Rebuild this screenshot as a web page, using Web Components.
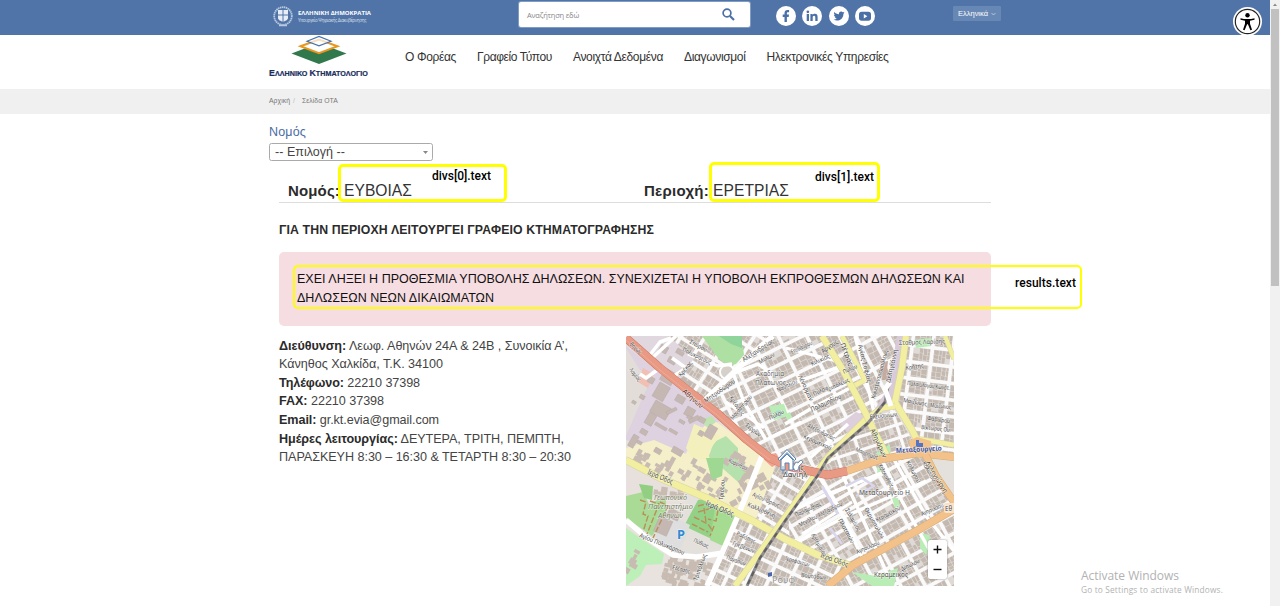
<!DOCTYPE html>
<html lang="el">
<head>
<meta charset="utf-8">
<title>Ελληνικό Κτηματολόγιο</title>
<style>
body{margin:0;width:1280px;height:606px;overflow:hidden;background:#fff;font-family:"Liberation Sans",Arial,sans-serif;color:#333}
</style>
</head>
<body>
<cadastre-page></cadastre-page>
<script>
const define=(name,html,ready)=>customElements.define(name,class extends HTMLElement{
  constructor(){super();this.attachShadow({mode:'open'}).innerHTML=html;}
  connectedCallback(){if(ready)ready.call(this,this.shadowRoot);}
});

/* One line of text whose tracking is adjusted to fill the width in "w". */
define('fit-text','<style>:host{display:block;white-space:pre;flex:none}span{display:inline}</style><span><slot></slot></span>',function(r){
  const w=+this.getAttribute('w'),n=this.textContent.length;
  this.style.width=w+'px';
  const s=r.querySelector('span');
  const now=s.getBoundingClientRect().width;
  if(now)this.style.letterSpacing=((w-now)/n).toFixed(4)+'px';
});

define('social-icon','<style>:host{display:flex;width:20px;height:20px;border-radius:50%;background:#fff;color:#4a70a6}svg{width:20px;height:20px}</style><svg viewBox="0 0 20 20" fill="currentColor"></svg>',function(r){
  const d={
   facebook:'<path d="M8.500 16V10.900H6.700V8.500h1.800V7.100C8.500 5 9.700 4 11.500 4c.8 0 1.400.1 1.600.1v2.100h-1.100c-.9 0-1.100.5-1.100 1.100v1.200h2.100l-.3 2.400h-1.800V16z"/>',
   linkedin:'<path d="M4.700 8h2.300v7H4.700zM8.400 8h2.200v1c.4-.7 1.200-1.200 2.300-1.200 2.200 0 2.700 1.500 2.700 3.400V15h-2.300v-3.400c0-.9-.1-1.800-1.200-1.800s-1.400.8-1.400 1.700V15H8.400z"/><circle cx="5.850" cy="5.800" r="1.350"/>',
   twitter:'<path d="M15.500 6.500c-.4.2-.8.300-1.300.4.500-.3.800-.7 1-1.200-.4.300-.9.400-1.400.5a2.250 2.250 0 0 0-3.850 2.050C8 8.200 6.400 7.300 5.300 6c-.6 1-.3 2.300.7 3-.4 0-.7-.1-1-.3 0 1.100.8 2 1.800 2.250-.3.100-.7.100-1 0 .3.900 1.100 1.550 2.100 1.600-1 .75-2.100 1.050-3.300.9 1 .65 2.200 1 3.450 1 4.200 0 6.500-3.500 6.350-6.800.4-.3.800-.7 1.100-1.150z"/>',
   youtube:'<rect x="4" y="5.700" width="12" height="9" rx="2.600"/><path fill="#fff" d="M8.800 8v4.400l3.500-2.200z"/>'};
  r.querySelector('svg').innerHTML=d[this.getAttribute('name')];
});

define('top-bar',`<style>
:host{display:flex;height:35px;background:#5074a8;box-sizing:border-box;padding-left:272px;align-items:flex-start;color:#fff;position:relative}
.crest{width:22px;height:22px;margin-top:5px;flex:none}
.gov{margin:9px 0 0 4px;width:221px;font:bold 6px/9px "Open Sans",sans-serif}
.gov fit-text+fit-text{font:4.500px/5px "Open Sans",sans-serif;opacity:.75}
.search{margin-top:2px;width:231px;height:25px;background:#fff;border-radius:2px;display:flex;align-items:center;justify-content:space-between;box-sizing:border-box;padding:0 15px 0 8px;color:#888;font:7.500px/12px "Open Sans",sans-serif;flex:none;box-shadow:0 0 0 1px #7f9cc3}
.social{display:flex;gap:6.300px;margin:6px 0 0 26px;width:177px}
.lang{margin-top:6px;background:#6787b5;height:15px;width:48px;display:flex;align-items:center;gap:3px;box-sizing:border-box;padding-left:5px;font:7.500px/15px "Liberation Sans",sans-serif;border-radius:1px}
.access{position:absolute;left:1233px;top:6.500px}
</style>
<svg class="crest" viewBox="0 0 22 22"><circle cx="11" cy="11" r="8.800" fill="none" stroke="#b8c9df" stroke-width="1.800" stroke-dasharray="1.500 .5"/><path d="M6 5h10v8c0 2-3 3-5 4-2-1-5-2-5-4z" fill="#e6edf6"/><path d="M11 5v12M6 10h10" stroke="#5074a8" stroke-width="1"/><path d="M7 20.500h8" stroke="#b8c9df" stroke-width="1.500"/></svg>
<div class="gov"><fit-text w="73">ΕΛΛΗΝΙΚΗ ΔΗΜΟΚΡΑΤΙΑ</fit-text><fit-text w="68">Υπουργείο Ψηφιακής Διακυβέρνησης</fit-text></div>
<div class="search"><fit-text w="52">Αναζήτηση εδώ</fit-text><svg width="13" height="13" viewBox="0 0 13 13" fill="none" stroke="#4a70a6"><circle cx="5" cy="5" r="3.900" stroke-width="1.700"/><path d="M8 8l4 4" stroke-width="2.200"/></svg></div>
<div class="social"><social-icon name="facebook"></social-icon><social-icon name="linkedin"></social-icon><social-icon name="twitter"></social-icon><social-icon name="youtube"></social-icon></div>
<div class="lang"><fit-text w="30">Ελληνικά</fit-text><svg width="5" height="4" viewBox="0 0 5 4"><path d="M.5 1l2 2 2-2" fill="none" stroke="#cbd7e8" stroke-width=".8"/></svg></div>
<svg class="access" width="29" height="29" viewBox="0 0 29 29"><circle cx="14.500" cy="14.500" r="14.500" fill="#fff"/><circle cx="14.500" cy="14.500" r="12.200" fill="#fff" stroke="#222" stroke-width="1.200"/><circle cx="14.500" cy="8.300" r="2.200"/><path d="M7.500 11.200q7 1.700 14 0v1.600l-4.500.9v3l2 6-1.600.6-2.500-6h-.8l-2.500 6-1.600-.6 2-6v-3l-4.500-.9z"/></svg>`);

define('main-nav',`<style>
:host{display:flex;height:54px;padding-left:269px;color:#333;font:12px/18px "Liberation Sans",sans-serif}
.logo{width:100px;margin-right:36px;flex:none;color:#192d5c}
.logo svg{display:block;width:56px;height:30px;margin:0 0 0 22px}
.logo fit-text{font:bold 7.200px/10px "Liberation Sans",sans-serif;margin-top:3px;-webkit-text-stroke:.2px #192d5c}
.logo b{font-size:8.800px}
nav{display:flex;gap:21px;padding-top:13px}
</style>
<div class="logo"><svg viewBox="0 0 56 30"><path d="M.5 18.500L28 8l27.500 10.500L28 29z" fill="#31794c"/><path d="M9.500 11.200L28 4.500l18.500 6.700L28 18.200z" fill="#fff" stroke="#e8961d" stroke-width="2"/><path d="M16 6.300L28 1.500l12 4.800L28 10.900z" fill="#fff" fill-opacity=".7" stroke="#4a72ad" stroke-width="1.200"/></svg><fit-text w="99"><b>Ε</b>ΛΛΗΝΙΚΟ <b>Κ</b>ΤΗΜΑΤΟΛΟΓΙΟ</fit-text></div>
<nav><fit-text w="51">Ο Φορέας</fit-text><fit-text w="75">Γραφείο Τύπου</fit-text><fit-text w="90">Ανοιχτά Δεδομένα</fit-text><fit-text w="61.500">Διαγωνισμοί</fit-text><fit-text w="122">Ηλεκτρονικές Υπηρεσίες</fit-text></nav>`);

define('bread-crumbs',`<style>:host{display:flex;height:24.500px;background:#f0f0f0;padding-left:269px;font:6.800px/24px "Liberation Sans",sans-serif;color:#777}i{font-style:normal;margin:0 7px 0 3px;color:#bbb}</style>
<fit-text w="21">Αρχική</fit-text><i>/</i><fit-text w="36">Σελίδα ΟΤΑ</fit-text>`);

define('prefecture-select',`<style>
:host{display:block;padding:9.500px 0 0 269px;font:12.500px/18px "Liberation Sans",sans-serif;color:#4a6da3}
.box{margin-top:2px;width:164px;height:18px;box-sizing:border-box;border:1px solid #aaa;border-radius:2.500px;display:flex;align-items:center;justify-content:space-between;padding:0 4px 0 5px;color:#444}
</style><fit-text w="37">Νομός</fit-text><div class="box"><fit-text w="70">-- Επιλογή --</fit-text><svg width="5" height="3"><path d="M0 0h5L2.500 3z" fill="#888"/></svg></div>`);

define('callout-box',`<style>:host{position:absolute;box-sizing:border-box;border:3px solid #ff0;border-radius:5px;display:flex;justify-content:flex-end;color:#000;font:500 12px/14px Roboto,sans-serif}</style><slot></slot>`);

define('area-info',`<style>
:host{display:block;margin-left:279px;width:712px}
.head{display:flex;height:42px;box-sizing:border-box;border-bottom:1.500px solid #ddd;font-size:15.600px;line-height:18px;padding:20.500px 0 0 9px;color:#333}
.head b{font-size:15px}
.head b,.addr b,h2{color:#2b2b2b}
.head .a{width:356px;display:flex;gap:4px}.head .b{display:flex;gap:4px}
h2{margin:18px 0 0;font-size:12.300px;line-height:18px}
.alert{margin-top:13px;height:74px;box-sizing:border-box;background:#f6dde1;border-radius:5px;padding:18px 0 0 18px;font-size:12.500px;line-height:18.500px;color:#111}
.cols{display:flex;margin-top:10px}
.addr{width:347px;font-size:12.600px;line-height:18.600px;color:#444;padding-top:.6px;box-sizing:border-box}
</style>
<div class="head"><div class="a"><fit-text w="52"><b>Νομός:</b></fit-text><fit-text w="68">ΕΥΒΟΙΑΣ</fit-text></div><div class="b"><fit-text w="65"><b>Περιοχή:</b></fit-text><fit-text w="76">ΕΡΕΤΡΙΑΣ</fit-text></div></div>
<h2><fit-text w="375">ΓΙΑ ΤΗΝ ΠΕΡΙΟΧΗ ΛΕΙΤΟΥΡΓΕΙ ΓΡΑΦΕΙΟ ΚΤΗΜΑΤΟΓΡΑΦΗΣΗΣ</fit-text></h2>
<div class="alert"><fit-text w="667.500">ΕΧΕΙ ΛΗΞΕΙ Η ΠΡΟΘΕΣΜΙΑ ΥΠΟΒΟΛΗΣ ΔΗΛΩΣΕΩΝ. ΣΥΝΕΧΙΖΕΤΑΙ Η ΥΠΟΒΟΛΗ ΕΚΠΡΟΘΕΣΜΩΝ ΔΗΛΩΣΕΩΝ ΚΑΙ</fit-text><fit-text w="197">ΔΗΛΩΣΕΩΝ ΝΕΩΝ ΔΙΚΑΙΩΜΑΤΩΝ</fit-text></div>
<div class="cols"><div class="addr">
<fit-text w="289"><b>Διεύθυνση:</b> Λεωφ. Αθηνών 24Α &amp; 24Β , Συνοικία Α’,</fit-text>
<fit-text w="164">Κάνηθος Χαλκίδα, Τ.Κ. 34100</fit-text>
<fit-text w="141"><b>Τηλέφωνο:</b> 22210 37398</fit-text>
<fit-text w="105"><b>FAX:</b> 22210 37398</fit-text>
<fit-text w="160"><b>Email:</b> gr.kt.evia@gmail.com</fit-text>
<fit-text w="285"><b>Ημέρες λειτουργίας:</b> ΔΕΥΤΕΡΑ, ΤΡΙΤΗ, ΠΕΜΠΤΗ,</fit-text>
<fit-text w="292">ΠΑΡΑΣΚΕΥΗ 8:30 – 16:30 &amp; ΤΕΤΑΡΤΗ 8:30 – 20:30</fit-text>
</div><street-map></street-map></div>`);

define('street-map',`<style>
:host{display:block;position:relative;width:328px;height:250px;flex:none;overflow:hidden;background:#e4e1dc}
svg{display:block}
.zoom{position:absolute;right:7px;bottom:7px;width:19.500px;height:39px;background:#fff;border-radius:2px;box-shadow:0 0 2px #777;display:grid;grid-template-rows:1fr 1fr;place-items:center}
.zoom svg{width:9px;height:9px}
</style><svg id="m" width="328" height="250" viewBox="0 0 328 250"></svg>
<div class="zoom"><svg viewBox="0 0 9 9"><path d="M.5 4.500h8M4.500.5v8" stroke="#111" stroke-width="1.400"/></svg><svg viewBox="0 0 9 9"><path d="M.5 4.500h8" stroke="#111" stroke-width="1.400"/></svg></div>`,function(r){
  let seed=7;const rnd=()=>(seed=(seed*16807)%2147483647)/2147483647;
  let out='',id=0;
  /* A district: rotated street grid with small irregular houses inside each block. */
  const blocks=(poly,ang,bw,bh,st,land='#dfdad5')=>{
    const k='c'+id++;let s='',t='';
    for(let x=-260;x<260;x+=bw+st)for(let y=-260;y<260;y+=bh+st){
      s+=`M${x} ${y}h${bw}v${bh}h${-bw}z`;
      for(let a=0;a<bw-1;){const w=3+rnd()*4;for(let b=0;b<bh-1;){const h=3+rnd()*4.500;
        if(rnd()>.08)t+=`M${(x+a+.3).toFixed(1)} ${(y+b+.3).toFixed(1)}h${(Math.min(w,bw-a)-.6).toFixed(1)}v${(Math.min(h,bh-b)-.6).toFixed(1)}h${(-Math.min(w,bw-a)+.6+rnd()*.8).toFixed(1)}z`;
        b+=h;}a+=w;}
    }
    out+=`<clipPath id="${k}"><path d="M${poly}z"/></clipPath><g clip-path="url(#${k})"><rect width="328" height="250" fill="#fbfafa"/><g transform="translate(164 125) rotate(${ang})"><path d="${s}" fill="${land}"/><path d="${t}" fill="#c4b9b0"/></g></g>`;
  };
  const area=(d,c)=>out+=`<path d="M${d}z" fill="${c}"/>`;
  const road=(d,c,w,e)=>{out+=(e?`<path d="M${d}" fill="none" stroke="${e}" stroke-width="${w+1}" stroke-linejoin="round"/>`:'')+`<path d="M${d}" fill="none" stroke="${c}" stroke-width="${w}" stroke-linejoin="round"/>`;};
  const label=(x,y,a,t,w,s=6,c='#444',x2='')=>out+=`<text transform="translate(${x} ${y}) rotate(${a})" font-size="${s}" fill="${c}" textLength="${w}" lengthAdjust="spacingAndGlyphs" stroke="#fff" stroke-opacity=".6" stroke-width="1.100" paint-order="stroke" ${x2}>${t}</text>`;
  const houses=(n,x,y,w,h,a,big)=>{let s='';for(let i=0;i<n;i++){const ww=3+rnd()*big,hh=3+rnd()*big;s+=`<rect x="${x+rnd()*w}" y="${y+rnd()*h}" width="${ww}" height="${hh}" transform="rotate(${a} ${x+w/2} ${y+h/2})"/>`;}out+=`<g fill="#c8bcb2">${s}</g>`;};
  /* Individually placed halls: x, y, width, height. */
  const halls=(a,list)=>out+='<g fill="#c5b8b3" stroke="#b9aaa6" stroke-width=".5">'+list.map(([x,y,w,h])=>`<rect x="${x}" y="${y}" width="${w}" height="${h}" transform="rotate(${a} ${x} ${y})"/>`).join('')+'</g>';

  blocks('78,70 107,36 148,0 200,0 240,80 262,122 200,135 150,126',-26,22,12,3.500);
  blocks('40,0 150,0 107,36 75,68 30,28',33,17,11,3.500);
  blocks('196,0 272,0 262,70 240,80',62,24,11,3.500);
  blocks('275,0 328,0 328,120 292,112 268,66',7,17,13,3.500);
  blocks('205,124 242,80 266,70 290,110 256,128 205,138',-18,19,10,3);
  blocks('150,120 205,136 256,126 300,118 328,175 292,194 227,230 160,205',-30,22,11,3.500);
  blocks('205,250 227,230 328,175 328,250',-28,18,14,3.500);
  blocks('110,115 155,124 190,142 162,178 164,204 111,178',31,17,10,3.500);
  blocks('111,180 205,222 225,232 200,250 81,250',25,16,11,3.500);
  /* west side */
  area('0,0 30,28 75,66 150,128 130,183 84,160 40,142 0,120','#e6e0db');
  area('0,10 30,34 75,70 96,84 72,96 56,122 30,112 0,104','#ded1e0');
  area('0,0 42,0 68,22 52,48','#e0d7df');
  area('28,0 42,0 44,12 34,14','#e0d7df');
  area('0,12 14,34 28,40 19,56 0,100','#e2ddd9');
  area('17,32 28,38 22,52 12,46','#f2bfb3');
  area('0,112 28,104 60,118 72,96 86,83 150,128 130,183 84,160 40,142 0,120','#f5efca');
  area('73,84 86,80 90,86 82,92','#bfe3b1');
  area('88,106 100,100 112,112 112,128 124,140 112,146 94,130 82,122','#b5e2ac');
  area('68,88 82,94 94,100 82,116 84,124 66,122 60,112','#f4f0bd');
  halls(30,[[40,32,13,13],[55,42,11,9],[34,46,12,16],[52,58,9,7],[30,64,18,13],[24,76,8,12],[62,70,9,9],[74,80,7,5],[15,58,5,4],[54,83,6,3],[62,79,7,3],[30,86,13,3],[44,92,9,3],[16,92,7,5],[8,98,6,13],[48,110,11,6],[30,111,7,5],[84,88,9,13],[74,94,5,5],[12,104,5,3],[24,40,6,6],[44,20,8,6],[36,8,8,7],[52,12,8,5],[7,64,4,3]]);
  halls(-26,[[62,84,11,4],[40,76,11,3]]);
  houses(14,4,116,34,14,30,5);houses(28,38,126,72,24,30,5);houses(12,110,124,20,44,62,6);
  houses(12,98,118,30,18,30,6);
  area('76,0 95,0 117,11 118,19 110,28 102,30 92,22','#aedfa3');
  area('93,0 116,0 116,12 105,8','#8ed49b');
  area('80,122 98,122 96,140 86,144','#9fd893');
  area('0,130 24,142 56,152 62,166 30,200 0,184','#e7e0dc');
  area('0,160 17,156 23,168 40,160 40,180 26,200 0,182','#a9db97');
  area('13,148 27,150 26,164 18,162','#93cf83');
  area('72,164 82,162 111,176 106,192 90,205 58,190','#93d286');
  area('90,166 112,177 99,211 84,204','#a5dc91');
  area('0,184 21,202 47,219 97,219 83,250 0,250','#e8e3df');
  houses(50,38,218,42,30,15,5);
  area('0,192 20,206 38,218 36,228 20,229 14,240 0,250','#bdf0b8');
  houses(5,2,214,14,22,30,5);
  houses(10,28,148,26,10,8,5);
  area('29,192 38,180 52,184 58,186 64,189 55,212 46,214 30,206','#dedede');
  halls(24,[[34,180,14,16],[44,172,12,9]]);
  out+='<path d="M14 164l6 2-3 12 5 2-5 16M24 165l9 3-12 30M34 166l8 4-15 32M72 170l15-4 6 4M68 181l14 7 4 6M72 176l14-4M78 172l2 14M92 174l-2 11 -8-2M66 188l16 8M88 190l-4 10" fill="none" stroke="#b98f58" stroke-width="1.400" stroke-dasharray="6 2"/>';
  /* parks */
  [['294,197 303,199 306,208 300,219 294,212'],['226,236 250,240 272,232 268,250 246,250'],['252,130 257,133 256,139 251,137'],['266,162 272,162 274,170 269,172'],['143,70 158,68 162,80 148,84'],['249,118 264,108 264,122'],['288,4 305,2 305,10 290,12'],['160,78 164,76 166,82 161,84']].forEach(a=>area(a[0],'#b9edb5'));
  area('150,75 155,74 156,80 150,81','#a8d8cf');
  area('271,0 281,0 268,64 262,68 252,78 246,78 262,52','#d8cad9');
  area('214,88 230,76 240,80 222,97','#ddcfdc');
  out+='<circle cx="101" cy="36" r="7" fill="#d5d0c9" stroke="#fff" stroke-width="2"/>';
  area('134,120 150,117 155,126 146,131','#f3a191');
  /* white streets */
  ['77,66 107,37 134,11 147,0','136,120 111,182 94,222 81,250','97,217 71,221 47,219 21,202 0,184','107,37 118,66 140,104','24,24 50,0','20,24 34,6 45,2','62,18 92,30 106,28','34,32 20,42 14,38','46,22 60,32 45,42','229,0 238,35 248,76','159,88 186,72 224,52','159,50 216,30','184,122 222,88','192,139 212,170 238,225','256,124 276,165 308,222','266,120 300,180 328,215','217,140 240,190 262,240','160,178 197,160 256,137','172,206 220,180 300,145','108,37 132,28 150,40'].forEach((d,i)=>road(d,'#fff',i<3?5.500:3.500));
  ['160,12 214,26','100,66 138,92','143,102 175,86','202,160 240,142','176,198 226,166'].forEach(d=>road(d,'#fff',3));
  road('196,150 212,178','#d9d6ee',3);road('220,150 236,142 248,150 230,160','#d8d5ec',2.500);road('204,192 216,208','#d9d6ee',2.500);
  /* main roads */
  const Y='#f2efa0',YE='#d8d3a0',O='#f2c28a',OE='#d8ab77';
  road('0,124 34,142 81,162 127,185 159,203 192,219 226,230',Y,6.500,YE);
  road('216,0 239,44 224,52',Y,4.500,YE);
  road('280,0 276,31 269,66 286,94 293,108',Y,6,YE);
  road('269,70 256,72 239,84 201,122 182,149 162,177 137,212 109,250',Y,5.500,YE);
  road('196,0 217,34 239,76 249,97 262,122',Y,6,YE);
  road('293,103 328,109',Y,4.500,YE);road('319,0 328,23',Y,4,YE);
  road('202,250 227,229 259,212 292,194 328,173',O,7,OE);
  road('221,135 256,123 292,117 328,121',O,7,OE);
  road('298,116 310,140 328,166',O,6.500,OE);
  area('283,105 291,101 305,105 306,116 293,122 285,116',O);
  road('0,2 34,32 64,56 91,77 121,104 144,122 161,130 179,134 202,139 221,135','#e99a85',7.500,'#cf7562');
  road('0,4 34,34 64,58 91,79 121,106 144,124','#edab98',1);
  road('263,46 259,66 242,87 202,122 192,139 159,185 134,222 121,250','#8f8d8d',3);
  out+='<path d="M259 66L242 87 202 122 192 139 159 185 134 222 121 250" fill="none" stroke="#5f5f5f" stroke-width="2" stroke-dasharray="5 4"/>';
  road('264,46 259,53 265,70','#fff',5);
  area('257,26 262,25 260,44 256,44','#c5aaa0');area('290,104 293,104 293,107 297,107 297,111 290,111','#5474c7');
  area('142,237 146,236 146,240 142,241','#4a67a8');
  out+='<rect x="318" y="167" width="12" height="10" rx="2" fill="#fae0c5"/>';
  /* labels */
  label(3,9,42,'θηνών',14,6.500);label(56,56,42,'Αθηνών',25,7,'#5a322b');
  label(56,15,26,'Πολυκράτους',31);label(63,7,28,'Σπύρου',19);label(55,41,-50,'Κρέκας',18);
  label(3,34,52,'Λαμίας',15);label(80,67,-35,'Μητροδώρου',36,6.500);
  label(118,26,-33,'Αλεξανδρείας',36,6.500);label(134,28,-28,'Μυλων',17);
  label(130,40,0,'Ακαδημία',28,7,'#666');label(129,49,0,'Πλάτωνος',31,7,'#666');
  label(103,62,55,'Κρέοντος',22);label(107,84,-50,'Μοναστηρίου',30);label(119,90,38,'Σερρών',18);label(144,84,-25,'Πύλου',16);label(152,56,-25,'Ναυπλίου',22);
  label(166,18,-25,'Επιδαύρου',23);label(186,30,-25,'Κιλικίας',20);label(197,18,-36,'Άργους',19,7);
  label(214,8,68,'Πέτρας',24,7);label(172,40,65,'Λένορμαν',28);label(218,38,-25,'Πύλου',15);label(188,60,-25,'Πύλου',16);label(201,56,-25,'Τριπόλεως',25);label(186,76,-25,'Παλαμηδίου',33,7);
  label(232,9,76,'Αγίας Σοφίας',39);label(249,63,-75,'Κωνσταντινουπόλεως',50);label(264,47,-77,'Δεληγιάννη',34,6.500);
  label(273,9,-2,'Σταθμός Λαρίσης',46,6.500,'#555');label(280,34,-8,'Κρήτης',18);label(281,49,7,'Παλαιολόγου Κωνστ.',43);label(277,66,10,'Μαιζώνος',24);label(304,71,6,'Μαιζώνος',21);label(301,84,8,'Φαβιέρου',23);label(295,93,6,'Βίκτωρος Ου.',30);
  label(244,83,-6,'Ελευσινίων',27);label(244,94,65,'Αθηνόρων',31,7);label(229,115,22,'Μαυροματ.',25);label(181,91,27,'Αλεξανδρείας',30);label(177,102,24,'Κεραμεικού',30);
  label(270,117,-3,'Μεταξουργείο',46,7,'#3c55a0','font-weight="bold"');
  label(299,127,58,'Δεληγιώργη',36,7);
  label(21,138,23,'Ιερά Οδός',27,7.500);label(79,169,23,'Ιερά Οδός',30,7.500);label(194,221,20,'Ιερά Οδός',29,7);
  const it='font-style="italic"';
  label(28,164,0,'Γεωπονικό',33,7.500,'#768262',it);label(22,173,0,'Πανεπιστήμιο',45,7.500,'#768262',it);label(32,182,0,'Αθηνών',25,7.500,'#768262',it);
  label(13,201,22,'Αγίου Πολυκάρπου',48,6.500);label(46,233,15,'Εδέσσης',18);label(67,206,23,'Πύθιας',16);label(71,245,-70,'Τριπόλεως',28);label(97,164,-85,'Τριόδου',20);
  label(126,160,24,'Αγίου Όρους',29);label(121,170,24,'Καλλισθένη',30);label(110,199,25,'Ροδόπης',20);label(106,209,20,'Γρεβενών',23);label(100,223,20,'Παγασών',20);label(102,126,25,'Κορίνθου',20);
  label(166,134,0,'της',12,6.500);label(157,141,0,'Δανιήλ',24,6.500);
  label(233,159,0,'Μεταξουργείο Η',51,7,'#555');label(174,191,-27,'Μεγάλου Αλεξάνδρου',48);label(170,181,-25,'Παραμυθίας',28);label(212,184,61,'Πλαταιών',27);label(219,174,60,'Σαλαμίνος',25);label(238,173,60,'Θερμοπυλών',34);label(251,186,-28,'Κεραμεικού',27);label(231,218,-23,'Αγησιλάου',25);label(296,180,-23,'Αγησιλάου',24);label(185,199,60,'Αρτεμισίου',25);label(252,130,60,'Κολοκυνθούς',25);label(280,126,62,'Κολωνού',24);label(296,127,60,'Κολωνού',22);
  label(248,241,0,'Κεραμεικός',34,7,'#555');label(159,224,16,'Ιεροφαντών',25);label(175,241,6,'Βουτάδων',25);label(276,235,-25,'Δίπυλου',20);label(319,174.500,0,'Εθ',7,6.500);
  label(146,247,0,'Ρουφ',23,8.500,'#929292');label(51,203,0,'Ρ',8,12,'#318bd2','font-weight="bold"');
  /* office marker */
  out+='<g fill="#fff" stroke="#5684b5" stroke-width="1"><path d="M152 123l9-9.500 9 9.500-1.500 1.500-7.500-8-7.500 8z"/><path d="M155 124l6-6 6 6v10h-4v-7h-4v7h-4z"/><path d="M157 130v8M161 134v4" stroke-width=".7"/><path d="M167 131l3-5 2 1 3-3 2 2-4 4-1 4-3 1z" stroke-width=".8"/></g>';
  const m=r.querySelector('#m');m.setAttribute('font-family','Noto Sans, sans-serif');m.innerHTML=out;
});

define('page-scrollbar',`<style>:host{display:block;width:10px;height:606px;background:#f1f1f1;flex:none}svg{display:block;height:9px;width:10px}.thumb{height:277px;margin:0 1px;background:#c1c1c1}</style><svg><path d="M3 6l2-2.500L7 6z" fill="#888"/></svg><div class="thumb"></div>`);

define('cadastre-page',`<style>
:host{display:flex;width:1280px;height:606px;position:relative;overflow:hidden;background:#fff}
main{width:1270px;flex:none}
.n0{left:338px;top:163.500px;width:169px;height:38.500px;padding:2px 13px 0 0}
.n1{left:709px;top:162px;width:171px;height:40px;padding:4.500px 3px 0 0}
.n2{left:293px;top:265px;width:789px;height:44px;border-width:2px;padding:8.500px 4px 0 0}
.win{position:absolute;left:1081px;top:568px;color:#b2b2b2;font:12px/16px "Open Sans",sans-serif}
.win fit-text+fit-text{font:8.300px/12px "Open Sans",sans-serif;margin-top:0}
</style>
<main><top-bar></top-bar><main-nav></main-nav><bread-crumbs></bread-crumbs><prefecture-select></prefecture-select><area-info></area-info></main>
<page-scrollbar></page-scrollbar>
<callout-box class="n0"><fit-text w="59">divs[0].text</fit-text></callout-box>
<callout-box class="n1"><fit-text w="59">divs[1].text</fit-text></callout-box>
<callout-box class="n2"><fit-text w="61">results.text</fit-text></callout-box>
<div class="win"><fit-text w="98">Activate Windows</fit-text><fit-text w="142">Go to Settings to activate Windows.</fit-text></div>`);
</script>
</body>
</html>
